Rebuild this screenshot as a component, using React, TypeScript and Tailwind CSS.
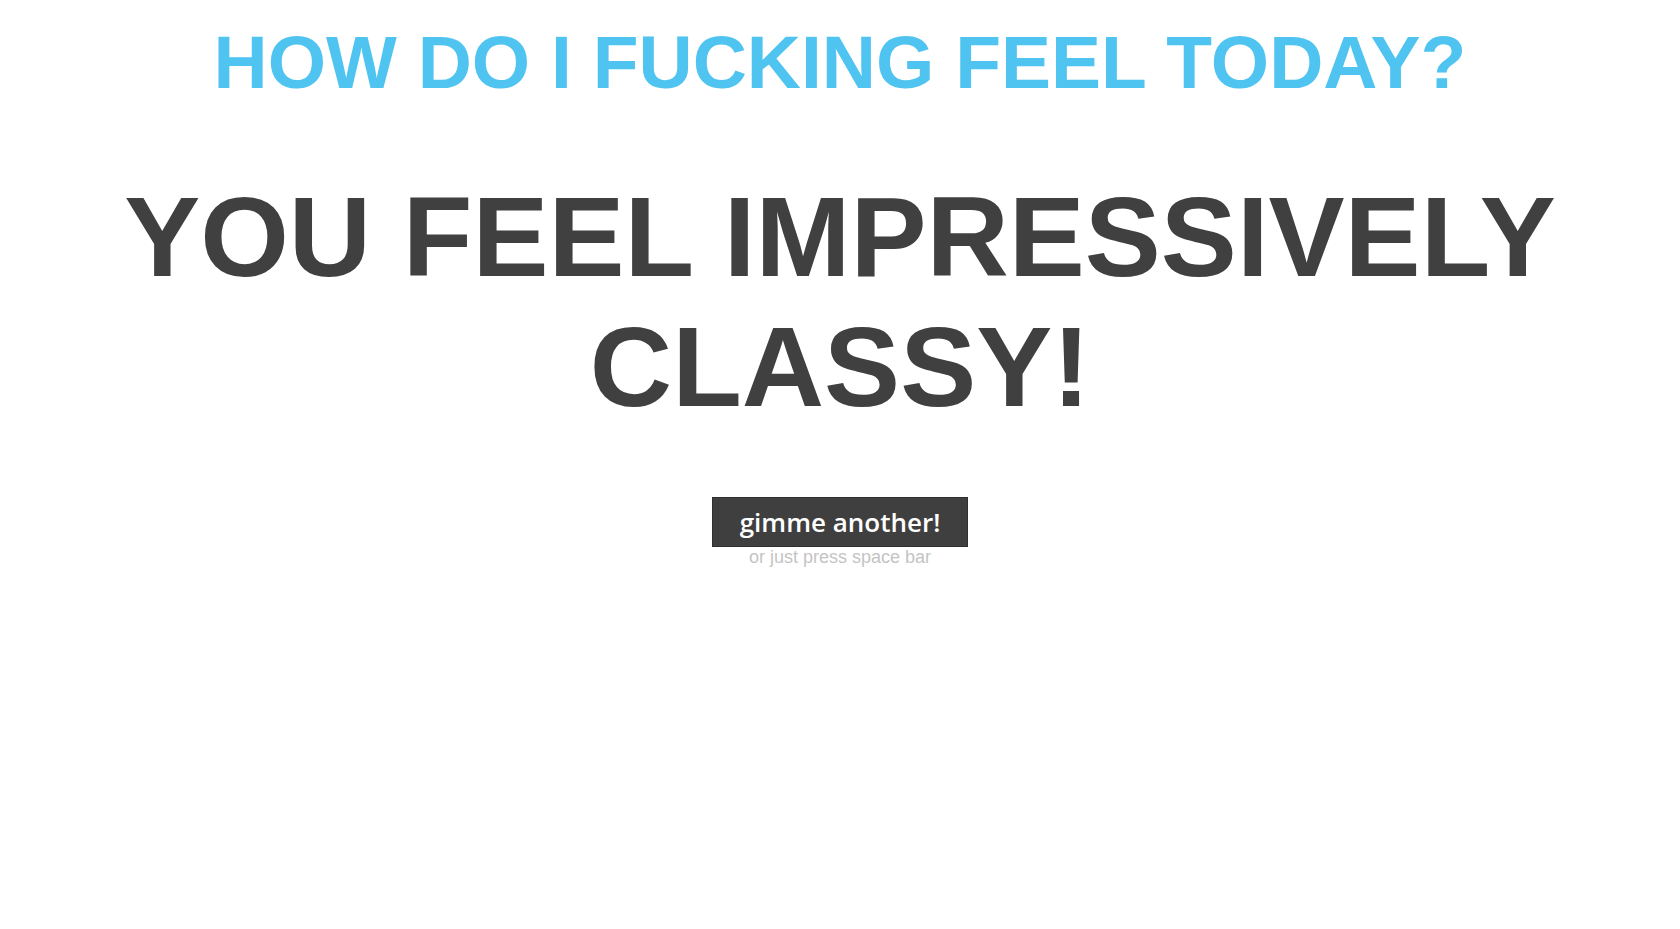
export default function App() {
  return (
    <div className="min-h-[929px] w-full bg-white flex flex-col items-center" style={{ fontFamily: '"Liberation Sans", Arial, sans-serif' }}>
      <h1 className="mt-[22px] text-[75px] leading-[80px] font-bold text-[#4fc4f1] text-center">HOW DO I FUCKING FEEL TODAY?</h1>
      <div className="mt-[70px] w-[1450px] text-center text-[114px] leading-[130px] font-bold text-[#404040]">
        YOU FEEL IMPRESSIVELY CLASSY!
      </div>
      <div className="mt-[65px] flex flex-col items-center">
        <button className="w-[256px] h-[50px] bg-[#3f3f3f] border border-[#2f2f2f] text-white text-[26px] font-semibold leading-[44px]" style={{ fontFamily: '"Open Sans", sans-serif' }}>
          gimme another!
        </button>
        <div className="text-[18px] leading-[20px] text-[#c4c4c4]">or just press space bar</div>
      </div>
    </div>
  );
}
